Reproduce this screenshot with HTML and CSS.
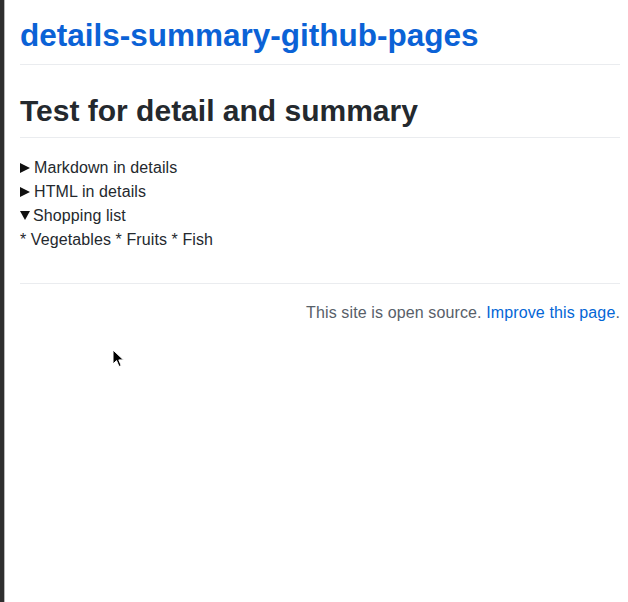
FILE: index.html
```html
<!DOCTYPE html>
<html lang="en">
<head>
<meta charset="utf-8">
<title>details-summary-github-pages</title>
<link rel="stylesheet" href="styles.css">
</head>
<body>
<div class="frame">
  <div class="edge"></div>
  <main class="page">
    <header class="site-header">
      <h1 class="site-title"><a href="#">details-summary-github-pages</a></h1>
    </header>
    <h2 class="post-title">Test for detail and summary</h2>
    <div class="details-list">
      <details><summary>Markdown in details</summary></details>
      <details><summary>HTML in details</summary></details>
      <details open><summary>Shopping list</summary><p class="items">* Vegetables * Fruits * Fish</p></details>
    </div>
    <footer class="site-footer">
      This site is open source. <a href="#">Improve this page</a>.
    </footer>
  </main>
  <svg class="cursor" width="14" height="20" viewBox="0 0 14 20" aria-hidden="true">
    <path d="M1 1 L1 15 L4.5 11.6 L7 17.5 L9.2 16.6 L6.8 10.9 L11.5 10.9 Z" fill="#000" stroke="#fff" stroke-width="1" stroke-linejoin="round"/>
  </svg>
</div>
</body>
</html>
```
FILE: styles.css
```css
html, body {
  margin: 0;
  padding: 0;
  background: #fff;
}
body {
  font-family: "Liberation Sans", Arial, Helvetica, sans-serif;
  font-size: 16px;
  line-height: 24px;
  color: #24292e;
}
.frame {
  position: relative;
  display: flex;
  width: 628px;
  height: 602px;
  overflow: hidden;
}
.edge {
  width: 4px;
  flex: none;
  background: #2f2f2f;
  border-right: 1px solid #b8b8b8;
}
.page {
  flex: 1;
  margin: 0 8px 0 15px;
  padding-top: 15px;
}
.site-title {
  margin: 0;
  font-size: 31.5px;
  line-height: 40px;
  font-weight: 700;
  padding-bottom: 9px;
  border-bottom: 1px solid #eaecef;
}
.site-title a {
  color: #0b62d6;
  text-decoration: none;
}
.post-title {
  margin: 27px 0 18px;
  font-size: 30px;
  line-height: 38px;
  font-weight: 700;
  padding-bottom: 7px;
  border-bottom: 1px solid #eaecef;
}
.details-list {
  letter-spacing: 0.1px;
}
.details-list summary {
  display: block;
  list-style: none;
  cursor: pointer;
  height: 24px;
}
.details-list summary::-webkit-details-marker {
  display: none;
}
.details-list summary::before {
  content: "";
  display: inline-block;
  width: 0;
  height: 0;
  border-left: 10px solid #111;
  border-top: 5px solid transparent;
  border-bottom: 5px solid transparent;
  margin-right: 4px;
  vertical-align: 0;
}
.details-list details[open] > summary::before {
  border-left: 5.5px solid transparent;
  border-right: 5.5px solid transparent;
  border-top: 9px solid #111;
  border-bottom: 0;
  margin-right: 3px;
  vertical-align: 1px;
}
.items {
  margin: 0;
}
.site-footer {
  margin-top: 31px;
  padding-top: 17px;
  border-top: 1px solid #eaecef;
  text-align: right;
  color: #586069;
  letter-spacing: 0.12px;
}
.site-footer a {
  color: #0366d6;
  text-decoration: none;
}
.cursor {
  position: absolute;
  left: 112px;
  top: 349px;
}
```
